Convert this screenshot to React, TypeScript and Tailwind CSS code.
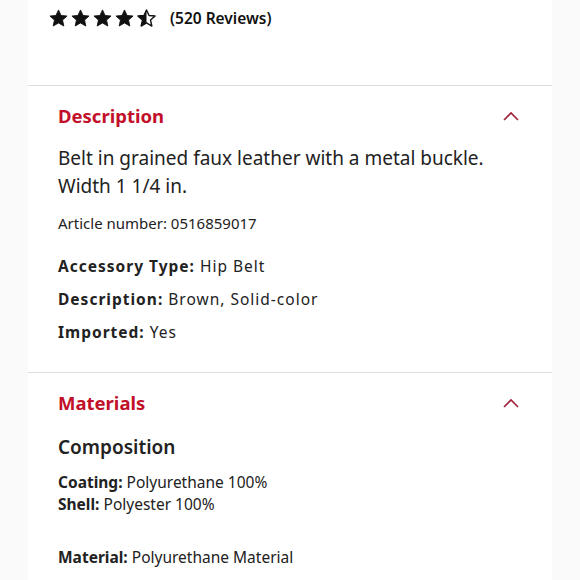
import React from 'react';

function Star({ half = false }: { half?: boolean }) {
  const d =
    'M12 2.2l2.9 6.3 6.9.7-5.2 4.6 1.5 6.8L12 17.1l-6.1 3.5 1.5-6.8L2.2 9.2l6.9-.7z';
  if (half) {
    return (
      <svg width="21" height="21" viewBox="0 0 24 24">
        <defs>
          <clipPath id="halfclip">
            <rect x="0" y="0" width="12" height="24" />
          </clipPath>
        </defs>
        <path d={d} fill="none" stroke="#111" strokeWidth="1.6" strokeLinejoin="round" />
        <path d={d} fill="#111" clipPath="url(#halfclip)" />
      </svg>
    );
  }
  return (
    <svg width="21" height="21" viewBox="0 0 24 24">
      <path d={d} fill="#111" stroke="#111" strokeWidth="1" strokeLinejoin="round" />
    </svg>
  );
}

function Chevron() {
  return (
    <svg width="18" height="12" viewBox="0 0 18 12" fill="none">
      <path d="M2 10l7-7 7 7" stroke="#a3213a" strokeWidth="1.6" />
    </svg>
  );
}

function SectionHeader({ title }: { title: string }) {
  return (
    <div className="flex items-center justify-between pr-[32px]">
      <h2 className="text-[18.5px] font-bold text-[#c20f2a] leading-[28px]">{title}</h2>
      <Chevron />
    </div>
  );
}

function Spec({ label, value }: { label: string; value: string }) {
  return (
    <div className="text-[15.5px] tracking-[1px] leading-[33px] text-[#222]">
      <span className="font-bold">{label}:</span>
      <span> {value}</span>
    </div>
  );
}

export default function App() {
  return (
    <div
      className="h-[580px] overflow-hidden bg-[#fafafa] flex justify-center"
      style={{ fontFamily: '"Noto Sans", Lato, sans-serif' }}
    >
      <div className="w-[524px] bg-white text-[#222]">
        <div className="h-[86px] border-b border-[#dedede] pl-[20px] pt-[7px]">
          <div className="flex items-center gap-[1px]">
            <Star />
            <Star />
            <Star />
            <Star />
            <Star half />
            <span className="ml-[12px] text-[15.5px] font-semibold text-[#111]">(520 Reviews)</span>
          </div>
        </div>

        <div className="border-b border-[#dedede] pl-[30px] pt-[16px] pb-[23px]">
          <SectionHeader title="Description" />
          <p className="mt-[14px] text-[19px] leading-[28px] pr-[30px]">
            Belt in grained faux leather with a metal buckle. Width 1 1/4 in.
          </p>
          <p className="mt-[11px] text-[15px] leading-[24px]">Article number: 0516859017</p>
          <div className="mt-[15px]">
            <Spec label="Accessory Type" value="Hip Belt" />
            <Spec label="Description" value="Brown, Solid-color" />
            <Spec label="Imported" value="Yes" />
          </div>
        </div>

        <div className="pl-[30px] pt-[16px]">
          <SectionHeader title="Materials" />
          <h3 className="mt-[16px] text-[19px] font-semibold leading-[28px]">Composition</h3>
          <div className="mt-[10px] text-[15.5px] leading-[22px]">
            <p>
              <span className="font-bold">Coating:</span> Polyurethane 100%
            </p>
            <p>
              <span className="font-bold">Shell:</span> Polyester 100%
            </p>
          </div>
          <p className="mt-[31px] text-[15.5px] leading-[22px]">
            <span className="font-bold">Material:</span> Polyurethane Material
          </p>
        </div>
      </div>
    </div>
  );
}
